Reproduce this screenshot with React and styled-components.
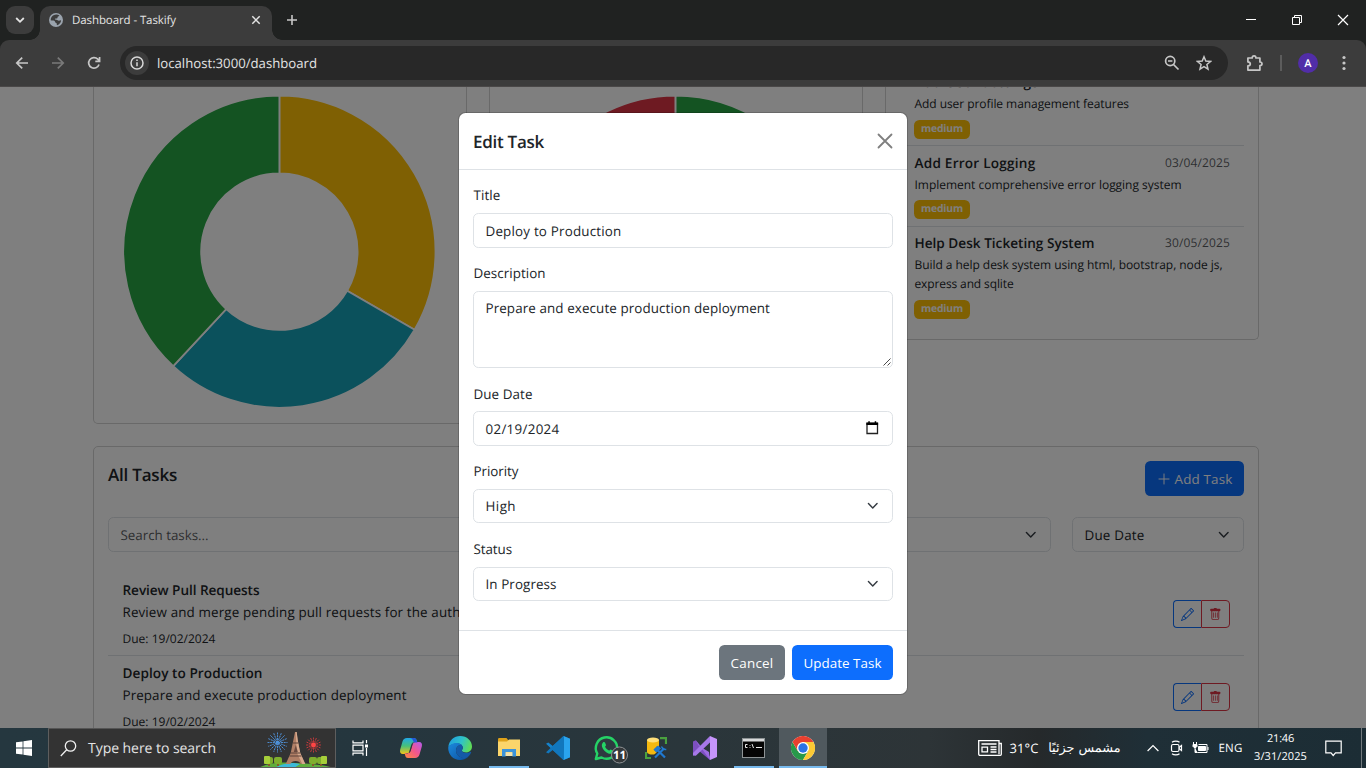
import React, { useLayoutEffect, useRef, useState } from "react";
import styled, { createGlobalStyle, css } from "styled-components";

const Global = createGlobalStyle`
  *, *::before, *::after { box-sizing: border-box; }
  html, body { margin: 0; height: 768px; overflow: hidden; background: #202221; }
  body { font-family: "Open Sans", "Noto Sans", "Liberation Sans", sans-serif; color: #212529; text-rendering: geometricPrecision; }
  svg { display: block; flex: none; }
`;

/* Text that spreads its letters to fill a given width */
const FitSpan = styled.span`
  display: inline-block;
  white-space: nowrap;
`;

function Fit({ w, children }) {
  const ref = useRef(null);
  const [spacing, setSpacing] = useState(0);
  useLayoutEffect(() => {
    const natural = ref.current.getBoundingClientRect().width;
    setSpacing((w - natural) / String(children).length);
  }, [w, children]);
  return (
    <FitSpan ref={ref} style={{ letterSpacing: `${spacing}px` }}>
      {children}
    </FitSpan>
  );
}

/* ---------- Browser frame ---------- */

const Screen = styled.div`
  width: 1366px;
  height: 768px;
  display: flex;
  flex-direction: column;
  overflow: hidden;
`;

const TabStrip = styled.div`
  flex: none;
  height: 40px;
  padding: 6px 0 0 6px;
  background: #202221;
  display: flex;
  align-items: flex-start;
`;

const TabSearch = styled.div`
  width: 28px;
  height: 28px;
  border-radius: 9px;
  background: #3c3c3c;
  display: grid;
  place-items: center;
  margin-right: 6px;
`;

const Tab = styled.div`
  position: relative;
  width: 232px;
  height: 34px;
  border-radius: 10px 10px 0 0;
  background: #3c3c3c;
  display: flex;
  align-items: center;
  padding: 0 10px 6px 9px;
  gap: 9px;
  color: #e3e3e3;
  font-size: 11.5px;
  &::before, &::after {
    content: "";
    position: absolute;
    bottom: 0;
    width: 10px;
    height: 10px;
  }
  &::before { left: -10px; background: radial-gradient(circle at 0 0, transparent 9.5px, #3c3c3c 10px); }
  &::after { right: -10px; background: radial-gradient(circle at 100% 0, transparent 9.5px, #3c3c3c 10px); }
`;

const TabTitle = styled.div` flex: 1; line-height: 20px; padding-top: 2px; `;

const NewTab = styled.div` margin: 8px 0 0 14px; `;

const WindowControls = styled.div`
  margin: 8px 17px 0 auto;
  display: flex;
  gap: 34px;
`;

const Toolbar = styled.div`
  flex: none;
  height: 47px;
  background: #202221;
`;

const ToolbarInner = styled.div`
  height: 47px;
  background: #3c3c3c;
  border-bottom: 1px solid #4a4848;
  border-radius: 9px 9px 0 0;
  display: flex;
  align-items: center;
  padding: 0 14px 0 14px;
`;

const NavButtons = styled.div`
  display: flex;
  gap: 20px;
  width: 106px;
`;

const Omnibox = styled.div`
  width: 1108px;
  height: 34px;
  border-radius: 17px;
  background: #282828;
  display: flex;
  align-items: center;
  padding: 0 16px 0 5px;
  color: #e3e3e3;
  font-size: 13.2px;
`;

const InfoDot = styled.div`
  width: 24px;
  height: 24px;
  border-radius: 50%;
  background: #3c3c3c;
  display: grid;
  place-items: center;
  margin-right: 8px;
`;

const Url = styled.div`
  flex: 1;
  line-height: 20px;
`;

const OmniIcons = styled.div` display: flex; gap: 16px; `;

const ToolActions = styled.div`
  margin-left: 18px;
  display: flex;
  align-items: center;
`;

const Divider = styled.div`
  width: 2px;
  height: 16px;
  margin: 0 16px 0 16px;
  background: #5c5c5c;
`;

const Avatar = styled.div`
  width: 20px;
  height: 20px;
  border-radius: 50%;
  background: #512da8;
  color: #fff;
  font-family: Roboto, sans-serif;
  font-size: 11px;
  font-weight: 500;
  line-height: 21px;
  text-align: center;
  margin-right: 24px;
`;

/* ---------- Page ---------- */

const Viewport = styled.div`
  position: relative;
  flex: none;
  height: 641px;
  overflow: hidden;
  background: #fff;
  font-size: 13.6px;
`;

const Page = styled.main`
  width: 1166px;
  margin-left: 93px;
`;

const Row = styled.div`
  display: grid;
  grid-template-columns: repeat(3, 374px);
  gap: 22px;
  align-items: start;
  margin-bottom: 22px;
  height: 337px;
`;

const Card = styled.section`
  border: 1px solid #d2d2d2;
  border-radius: 5px;
  background: #fff;
`;

const ChartCard = styled(Card)`
  height: 337px;
  border-top: 0;
  border-radius: 0 0 5px 5px;
  padding-left: 15px;
`;

const UpcomingCard = styled(Card)`
  height: 253px;
  border-top: 0;
  border-radius: 0 0 5px 5px;
  padding: 0 14px;
  overflow: hidden;
`;

const Upcoming = styled.div`
  height: ${(p) => p.$h}px;
  padding: ${(p) => p.$pt}px 14px 0 14.5px;
  border-bottom: ${(p) => (p.$last ? 0 : 1)}px solid #dee2e6;
  margin-top: ${(p) => p.$shift || 0}px;
`;

const UpcomingHead = styled.div`
  display: flex;
  justify-content: space-between;
  height: 20px;
  line-height: 20px;
`;

const Strong = styled.div`
  font-size: 13.6px;
  font-weight: 600;
`;

const Muted = styled.div`
  color: rgba(33, 37, 41, 0.75);
  font-size: 12px;
`;

const Small = styled.div`
  font-size: 12px;
  line-height: 19px;
  padding-top: 2px;
`;

const Badge = styled.div`
  width: 56px;
  height: 18.5px;
  margin: ${(p) => p.$mt}px 0 0 -0.5px;
  padding-top: 1px;
  border-radius: 5.4px;
  background: #ffc107;
  color: #fff;
  font-size: 10.4px;
  font-weight: 700;
  line-height: 17.5px;
  text-align: center;
`;

const TasksCard = styled(Card)`
  height: 320px;
  padding: 14px 14px 0;
`;

const TasksHead = styled.div`
  display: flex;
  justify-content: space-between;
  height: 56px;
`;

const H5 = styled.h5`
  margin: 0;
  font-size: 17px;
  font-weight: 600;
  line-height: 27px;
`;

const Button = styled.button`
  border: 0;
  height: 35px;
  width: ${(p) => p.$w}px;
  padding: 1px 0 0;
  border-radius: 5.4px;
  background: ${(p) => (p.$secondary ? "#6c757d" : "#0d6efd")};
  color: #fff;
  font: ${(p) => p.$weight || 500} 13.4px "Open Sans", sans-serif;
  display: flex;
  align-items: center;
  justify-content: center;
  gap: 4px;
`;

const Filters = styled.div`
  display: grid;
  grid-template-columns: 364px repeat(3, 171.5px) 172px;
  gap: 21.375px;
  margin-bottom: 20px;
`;

const field = css`
  border: 1px solid #dee2e6;
  border-radius: 5.4px;
  background: #fff;
  padding: 0 13.5px 0 11.5px;
  font-size: 13.4px;
  display: flex;
  justify-content: space-between;
  align-items: center;
`;

const Field = styled.div`
  ${field}
  height: ${(p) => p.$h || 35}px;
  color: ${(p) => (p.$placeholder ? "rgba(33,37,41,.75)" : "#212529")};
`;

const TextArea = styled.div`
  ${field}
  height: 77px;
  padding: 6px 0 0 11.5px;
  align-items: flex-start;
  line-height: 20px;
`;

const ResizeGrip = styled.svg` align-self: flex-end; `;

const CalendarIcon = styled.svg` margin-bottom: 2px; `;

const Task = styled.div`
  height: 84px;
  padding: 7px 14.5px 0 14.5px;
  border-bottom: 1px solid #dee2e6;
  display: flex;
  justify-content: space-between;
  & + & { padding-top: 6px; }
`;

const TaskDesc = styled.div`
  font-size: 13.4px;
  line-height: 22px;
`;

const TaskDue = styled.div`
  font-size: 12px;
  line-height: 20px;
  padding-top: 6px;
`;

const TaskTitle = styled(Strong)` line-height: 22px; `;

const Actions = styled.div`
  display: flex;
  margin-top: 21px;
`;

const IconButton = styled.div`
  width: ${(p) => (p.$danger ? 29 : 28)}px;
  height: 28px;
  border: 1px solid ${(p) => (p.$danger ? "#dc3545" : "#0d6efd")};
  color: ${(p) => (p.$danger ? "#dc3545" : "#0d6efd")};
  border-radius: ${(p) => (p.$danger ? "0 4px 4px 0" : "4px 0 0 4px")};
  ${(p) => !p.$danger && css` border-right: 0; `}
  display: grid;
  place-items: center;
`;

/* ---------- Dialog ---------- */

const Backdrop = styled.div`
  position: absolute;
  inset: 0;
  background: rgba(0, 0, 0, 0.5);
  padding: 26px 0 0 459px;
`;

const Modal = styled.div`
  width: 448px;
  height: 581px;
  border-radius: 6.5px;
  background: #fff;
  box-shadow: 0 0 0 1px rgba(0, 0, 0, 0.175);
`;

const ModalHeader = styled.div`
  height: 57px;
  padding: 0 14px;
  border-bottom: 1px solid #dee2e6;
  display: flex;
  align-items: center;
  justify-content: space-between;
`;

const ModalBody = styled.div`
  height: 460px;
  padding: 14px 14px 0;
`;

const Group = styled.div` height: ${(p) => p.$h}px; `;

const Label = styled.div`
  font-size: 13.4px;
  line-height: 22px;
  padding-left: 0.5px;
  height: ${(p) => p.$h || 29}px;
`;

const ModalFooter = styled.div`
  height: 64px;
  padding: 14px;
  border-top: 1px solid #dee2e6;
  display: flex;
  justify-content: flex-end;
  gap: 7px;
`;

/* ---------- Taskbar ---------- */

const Taskbar = styled.div`
  flex: none;
  height: 40px;
  display: flex;
  background: linear-gradient(90deg, #25373f 0, #25363e 28%, #2a363b 50%, #2d3437 68%, #25292b 76%, #1f2f37 84%, #1c2d35 100%);
  color: #fff;
  font-size: 11.5px;
`;

const Start = styled.div`
  width: 48px;
  display: grid;
  place-items: center;
`;

const SearchBox = styled.div`
  width: 288px;
  background: #333;
  border: 1px solid #5e5e5e;
  border-top-color: #555;
  display: flex;
  align-items: center;
  padding-left: 11px;
  color: #e4e4e4;
  font-size: 14px;
`;

const SearchText = styled.div` flex: 1; padding: 1px 0 0 11px; `;

const Apps = styled.div`
  display: flex;
  gap: 1px;
  margin-left: 3px;
`;

const AppTile = styled.div`
  width: 48px;
  height: 40px;
  display: flex;
  align-items: center;
  justify-content: center;
  background: ${(p) => (p.$active ? "#50595e" : "transparent")};
  ${(p) =>
    p.$line &&
    css`
      background-image: linear-gradient(#76b9ed, #76b9ed);
      background-size: ${p.$line}px 2px;
      background-position: center bottom;
      background-repeat: no-repeat;
    `}
`;

const TaskView = styled(Start)``;

const Tray = styled.div`
  margin-left: auto;
  display: flex;
  align-items: center;
`;

const Weather = styled.div`
  display: flex;
  align-items: center;
  margin-right: 26.5px;
  font-size: 13px;
`;

const Degrees = styled.div` margin: 0 9px 0 8px; `;

const Arabic = styled.div`
  width: 73px;
  direction: rtl;
  white-space: nowrap;
  font-family: "DejaVu Sans", "Noto Sans", sans-serif;
  font-size: 12.8px;
`;

const TrayIcons = styled.div`
  display: flex;
  align-items: center;
  gap: 9.5px;
`;

const Clock = styled.div`
  width: 54px;
  margin: 0 17.5px 0 11px;
  text-align: center;
  line-height: 18px;
  font-size: 11px;
`;

const ShowDesktop = styled.div`
  height: 40px;
  width: 5px;
  margin-left: 19px;
  border-left: 1px solid #71797d;
`;

/* ---------- Drawings ---------- */

const Chevron = () => (
  <svg width="11.500" height="11.500" viewBox="0 0 16 16" fill="none" stroke="#343a40" strokeWidth="2" strokeLinecap="round" strokeLinejoin="round">
    <path d="m2 5 6 6 6-6" />
  </svg>
);

const Pencil = () => (
  <svg width="13" height="13" viewBox="0 0 16 16" fill="currentColor">
    <path d="M12.146.146a.5.5 0 0 1 .708 0l3 3a.5.5 0 0 1 0 .708l-10 10a.5.5 0 0 1-.168.11l-5 2a.5.5 0 0 1-.65-.65l2-5a.5.5 0 0 1 .11-.168zM11.207 2.5 13.5 4.793 14.793 3.5 12.5 1.207zm1.586 3L10.5 3.207 4 9.707V10h.5a.5.5 0 0 1 .5.5v.5h.5a.5.5 0 0 1 .5.5v.5h.293zm-9.761 5.175-.106.106-1.528 3.821 3.821-1.528.106-.106A.5.5 0 0 1 5 12.5V12h-.5a.5.5 0 0 1-.5-.5V11h-.5a.5.5 0 0 1-.468-.325" />
  </svg>
);

const Trash = () => (
  <svg width="12.600" height="12.600" viewBox="0 0 16 16" fill="currentColor">
    <path d="M2.500 1a1 1 0 0 0-1 1v1a1 1 0 0 0 1 1H3v9a2 2 0 0 0 2 2h6a2 2 0 0 0 2-2V4h.5a1 1 0 0 0 1-1V2a1 1 0 0 0-1-1H10a1 1 0 0 0-1-1H7a1 1 0 0 0-1 1zM4.100 4h7.800v9.100a.9.9 0 0 1-.9.9H5a.9.9 0 0 1-.9-.9z" fillRule="evenodd" />
    <path d="M5.500 5.500A.5.5 0 0 1 6 6v6a.5.5 0 0 1-1 0V6a.5.5 0 0 1 .5-.5m2.500 0a.5.5 0 0 1 .5.5v6a.5.5 0 0 1-1 0V6a.5.5 0 0 1 .5-.5m3 .5a.5.5 0 0 0-1 0v6a.5.5 0 0 0 1 0z" />
  </svg>
);

function Donut({ cx, slices }) {
  const cy = 164.7, R = 155.3, r = 79;
  const at = (deg, rad) => {
    const a = (deg - 90) * Math.PI / 180;
    return `${cx + rad * Math.cos(a)} ${cy + rad * Math.sin(a)}`;
  };
  return (
    <svg width="343" height="336" viewBox="0 0 343 336">
      {slices.map(([from, to, color]) => {
        const large = to - from > 180 ? 1 : 0;
        return (
          <path
            key={color}
            fill={color}
            stroke="#fff"
            strokeWidth="1.8"
            d={`M${at(from, R + 0.8)}A${R + 0.8} ${R + 0.8} 0 ${large} 1 ${at(to, R + 0.8)}L${at(to, r - 0.8)}A${r - 0.8} ${r - 0.8} 0 ${large} 0 ${at(from, r - 0.8)}Z`}
          />
        );
      })}
    </svg>
  );
}

const Globe = () => (
  <svg width="14" height="14" viewBox="0 0 14 14">
    <circle cx="7" cy="7" r="7" fill="#9aa3ad" />
    <path d="M6.2 1.7c1.3-.5 3-.2 4.2.8-.3.9-1.1.7-1.7 1.2-.5.5.3 1-.4 1.6-.8.5-1.9-.1-2.3.7-.2.6.8.8 1.5.8 1 0 1.3.8 2.2 1 .8.1 1.7-.6 2.4-.5-.1 2.3-1.7 4.3-4 4.900-.5-.5-.2-1.300-.5-1.900-.4-.6-1.300-.5-1.500-1.300-.1-.7-.7-1.300-1.500-1.500-.8-.1-1.700.1-2.900-.2C1.600 5 3 2.700 5 2z" fill="#3c3c3c" />
  </svg>
);

const Eiffel = () => (
  <svg width="80" height="38" viewBox="-1 -1 80 38">
    <path d="M2 38C14 32 28 32 40 33s26 1 38 5z" fill="#5fae3d" />
    <path d="M18 38c8-4 14-5 20-5l6 1-6 4z" fill="#3cb9d8" />
    {[10, 19, 54, 62].map((x) => (
      <g key={x}>
        <path d={`M${x + 2} 32h2v4h-2z`} fill="#8a5a2b" />
        <rect x={x - 1} y="27" width="8" height="7" rx="2" fill="#7fae2e" />
      </g>
    ))}
    <rect x="8" y="26" width="6" height="8" rx="1" fill="#a7cf3a" />
    <rect x="65" y="26" width="6" height="8" rx="1" fill="#a7cf3a" />
    <path d="M39 2h1.600l1 8 2.600 13 5 11h-4.500c-1-4-9.300-4-10.300 0H29.700l5-11 2.700-13z" fill="#b07f66" />
    <path d="M39.500 2h1.200l1 8 2.600 13 5 11h-3L41 23z" fill="#d6a98d" />
    <path d="M34.500 23h10M33.500 26h12M37 13h5.500" stroke="#5d4238" strokeWidth="1.200" />
    <path d="M39.800 15l2 7h-4z" fill="#6b4b40" />
    <g stroke="#4f95e0" strokeWidth=".9" strokeDasharray="2 .7">
      {[0, 22.5, 45, 67.5, 90, 112.5, 135, 157.5].map((a) => (
        <path key={a} d="M11.500 12.500h20" transform={`rotate(${a} 21.500 12.500)`} />
      ))}
    </g>
    <g stroke="#e03a3e" strokeWidth=".8" strokeDasharray="2 .6">
      {[0, 22.5, 45, 67.5, 90, 112.5, 135, 157.5].map((a) => (
        <path key={a} d="M50 15h15" transform={`rotate(${a} 57.500 15)`} />
      ))}
    </g>
    <circle cx="57.500" cy="15" r="2.400" fill="#ff4545" />
  </svg>
);

const Copilot = () => (
  <svg width="24" height="24" viewBox="0 0 24 24">
    <defs>
      <linearGradient id="cpA" x1="0" y1="0" x2="0" y2="1"><stop stopColor="#21a9e8" /><stop offset=".5" stopColor="#47c07a" /><stop offset="1" stopColor="#f5c518" /></linearGradient>
      <linearGradient id="cpB" x1="1" y1="0" x2="0" y2="1"><stop stopColor="#b45bf0" /><stop offset=".5" stopColor="#f2568b" /><stop offset="1" stopColor="#ff8a3c" /></linearGradient>
    </defs>
    <path d="M8 2h7c1.500 0 2.300 1 2.700 2.300L18.500 7H15c-1.500 0-2.300.8-2.800 2.500l-1.700 5.700C10 17 9 18 7.500 18H4c-2.500 0-3.500-2-2.800-4.500l2.300-8C4.200 3.300 5.500 2 8 2z" fill="url(#cpA)" />
    <path d="M16 22H9c-1.500 0-2.300-1-2.700-2.300L5.500 17H9c1.500 0 2.300-.8 2.800-2.500l1.700-5.700C14 7 15 6 16.500 6H20c2.500 0 3.500 2 2.800 4.500l-2.300 8C19.800 20.700 18.500 22 16 22z" fill="url(#cpB)" />
    <path d="M8 2h7c1.500 0 2.300 1 2.700 2.300l.7 2.200h-3.600L14 4.500C13.500 3 12.500 2 11 2z" fill="#2456d6" />
    <path d="M13.500 8.800C14 7 15 6 16.500 6h-1.700c-1.300.2-2.100 1-2.600 2.800l-2 6.800c-.4 1.400-1 2-2 2.400h-2.400L9 17c1.500 0 2.300-.8 2.800-2.500z" fill="#2a343a" opacity=".55" />
  </svg>
);

const Edge = () => (
  <svg width="24" height="24" viewBox="0 0 24 24">
    <defs>
      <linearGradient id="edA" x1="0" y1=".2" x2="1" y2=".5"><stop stopColor="#1f9de0" /><stop offset=".55" stopColor="#2fc2c9" /><stop offset="1" stopColor="#5fdc58" /></linearGradient>
      <linearGradient id="edB" x1="0" y1="0" x2="1" y2="1"><stop stopColor="#1b8ade" /><stop offset="1" stopColor="#0c4f9e" /></linearGradient>
    </defs>
    <path d="M.3 11C1 4.600 6 0 12.200 0 19 0 24 5 24 10.500c0 3.500-2.600 6-6 6-2.600 0-4.200-1-4.200-1.900 0-.7 1-1 1-2.800 0-2.300-2.300-4.300-5.600-4.300C5.500 7.500 2 9 .3 11z" fill="url(#edA)" />
    <path d="M.2 11.500C1.500 8.800 5 7 8.600 7c2 0 3.800.7 4.900 1.700-3.800.3-5.500 3-5.500 5.700 0 4.200 3.800 7.400 8.400 7.400 1.300 0 2.700-.3 3.600-.7-2 2-4.900 2.900-8 2.900C5.300 24 0 18.700.2 11.500z" fill="url(#edB)" />
    <path d="M8 14.400c0-2.700 1.700-5.100 5.200-5.800 1.100 1 1.600 2.100 1.600 3.200 0 1.800-1 2.100-1 2.800 0 1.200 2 2.400 4.800 2.400 1.600 0 3-.5 4-1.200.5-.3.8.100.5.700-1 2.400-2.300 4.200-4.300 5.200-5.800 1.300-10.800-2.500-10.800-7.300z" fill="#145aa8" />
  </svg>
);

const Folder = () => (
  <svg width="22" height="20" viewBox="0 0 22 20">
    <path d="M0 1.500C0 .6.500 0 1.200 0h7.300l2 2.500V5H0z" fill="#dfa21a" />
    <path d="M0 3.500h9l2-2h11V18H0z" fill="#fbd56b" />
    <path d="M4 11h14v7.500h-3.700V14H7.700v4.500H4z" fill="#3c93da" />
    <path d="M7.700 14.500h6.600V18H7.700z" fill="#f4e2ae" />
  </svg>
);

const VSCode = () => (
  <svg width="24" height="24" viewBox="0 0 24 24">
    <path d="M17.500 0 6.800 10 2.300 6.600 0 7.700 17.500 24l6.500-2.800-6-4.800z" fill="#1583cc" />
    <path d="M17.500 24 6.800 14l-4.500 3.400L0 16.300 17.500 0 24 2.800 18 7.600z" fill="#1177bd" />
    <path d="M17.500 0 24 2.800v18.400L17.500 24c.3-.3.500-.8.500-1.400V1.400c0-.6-.2-1.100-.5-1.400z" fill="#2aa4ee" />
  </svg>
);

const WhatsApp = () => (
  <svg width="42" height="32" viewBox="0 0 42 32">
    <g transform="translate(7.500 2)">
      <path d="M2.300 25 3.800 19.500A10.700 10.700 0 1 1 8 23.500z" fill="#2e3b40" stroke="#25d366" strokeWidth="2.400" strokeLinejoin="round" />
      <path d="M9.500 8.500c.5-.6 1.700-.6 2 .1l1 2.300c.2.600-1 1.500-.9 1.900.8 1.700 2.200 3 3.900 3.800.5.200 1.300-1.200 1.800-1l2.300 1.100c.6.300.3 1.900-.4 2.400-1.200 1-2.900.9-4.400.3-3-1.200-5.200-3.500-6.200-6.300-.5-1.600-.2-3.600.9-4.600z" fill="#25d366" />
    </g>
    <circle cx="33.500" cy="23" r="8" fill="#34383a" stroke="#8d9194" strokeWidth="1" />
    <text x="33.500" y="27.200" textAnchor="middle" fontFamily="Open Sans, sans-serif" fontSize="11.500" fontWeight="700" fill="#fff">11</text>
  </svg>
);

const SqlTools = () => (
  <svg width="22" height="22" viewBox="0 0 22 22">
    <path d="M15 1.200h6V7M1 15v6h5" stroke="#4aa13f" strokeWidth="2.200" fill="none" />
    <path d="M2 3v12c0 1.500 2.500 2.600 6 2.600s6-1.100 6-2.600V3z" fill="#f5b90f" />
    <ellipse cx="8" cy="3" rx="6" ry="2.600" fill="#ffe07a" />
    <path d="m10 20 8-8m-7.500-1L20 20" stroke="#2a3439" strokeWidth="4.500" />
    <path d="m10 20.500 8.500-8.500M11.500 12 20 20.500" stroke="#2079d0" strokeWidth="2.200" />
    <path d="m9.500 12.500 3.500-3 2 2-3.500 3zM16.500 9.500l1.500 2.800 3.300.2" stroke="#2079d0" strokeWidth="1.500" fill="#2079d0" />
  </svg>
);

const VisualStudio = () => (
  <svg width="24" height="24" viewBox="0 0 24 24">
    <path d="M0 5.500 2.800 4.300 17 20.500V24L5.500 14.500 2.800 18.500 0 19.500z" fill="#7d4fc0" />
    <path d="M2.800 4.300 17 24l-1-8L5.500 9.500z" fill="#9c6ae0" />
    <path d="M0 19.500V17L15.500 1.500 17 0v6.500L2.800 19.700z" fill="#a678e8" />
    <path d="M17 0l7 3v18l-7 3z" fill="#c695fb" />
  </svg>
);

const Terminal = () => (
  <svg width="24" height="20" viewBox="0 0 24 20">
    <rect x=".5" y=".5" width="22" height="19" fill="#050505" stroke="#8e9496" />
    <path d="M1 1h21v2.500H1z" fill="#d8dadb" />
    <path d="M5.500 6.500h-2v3h2M8 7v.8M8 9v.8M10 6l1.500 4M14 9.500h6" stroke="#e8e8e8" strokeWidth="1" fill="none" />
  </svg>
);

const Chrome = () => (
  <svg width="24" height="24" viewBox="0 0 24 24">
    <circle cx="12" cy="12" r="12" fill="#fff" />
    <path d="M1.600 6A12 12 0 0 0 12 24l5.200-9H6.800z" fill="#27994a" />
    <path d="M22.400 6A12 12 0 0 1 12 24l5.200-9L12 6z" fill="#fcc934" />
    <path d="M1.600 6 6.800 15 12 6h10.400A12 12 0 0 0 1.600 6z" fill="#e8402f" />
    <circle cx="12" cy="12" r="6" fill="#fff" />
    <circle cx="12" cy="12" r="4.700" fill="#2b73e6" />
  </svg>
);

const line = { fill: "none", stroke: "#c7c7c7", strokeWidth: 1.7 };

function BrowserFrame() {
  return (
    <>
      <TabStrip>
        <TabSearch>
          <svg width="10" height="8" viewBox="0 0 10 8" fill="none" stroke="#e3e3e3" strokeWidth="1.800"><path d="m1.200 2 3.800 3.800L8.800 2" /></svg>
        </TabSearch>
        <Tab>
          <Globe />
          <TabTitle><Fit w={104}>Dashboard - Taskify</Fit></TabTitle>
          <svg width="12" height="12" viewBox="0 0 12 12" fill="none" stroke="#e3e3e3" strokeWidth="1.500"><path d="m2.300 2.300 7.400 7.400m0-7.400L2.300 9.700" /></svg>
        </Tab>
        <NewTab>
          <svg width="12" height="12" viewBox="0 0 12 12" {...line} strokeWidth="1.600"><path d="M6 1v10M1 6h10" /></svg>
        </NewTab>
        <WindowControls>
          <svg width="12" height="12" viewBox="0 0 12 12" stroke="#fff"><path d="M1 5.500h10" /></svg>
          <svg width="12" height="12" viewBox="0 0 12 12" stroke="#fff" fill="none"><path d="M1.500 3.500h7v7h-7zM3.500 3.500v-2h7v7h-2" /></svg>
          <svg width="12" height="12" viewBox="0 0 12 12" stroke="#fff" strokeWidth="1.200"><path d="m1 1 10 10M11 1 1 11" /></svg>
        </WindowControls>
      </TabStrip>
      <Toolbar>
        <ToolbarInner>
          <NavButtons>
            <svg width="16" height="16" viewBox="0 0 16 16" {...line}><path d="M14 8H3m5.200-5.300L2.800 8l5.400 5.300" /></svg>
            <svg width="16" height="16" viewBox="0 0 16 16" {...line} stroke="#7a7a7a"><path d="M2 8h11M7.800 2.700 13.200 8l-5.400 5.300" /></svg>
            <svg width="16" height="16" viewBox="0 0 16 16" {...line}><path d="M13 9.500A5.300 5.300 0 1 1 11.800 4.200L13.500 6M13.600 2v4.300H9.300" /></svg>
          </NavButtons>
          <Omnibox>
            <InfoDot>
              <svg width="14" height="14" viewBox="0 0 14 14" fill="none" stroke="#d8d8d8" strokeWidth="1.500"><circle cx="7" cy="7" r="6" /><path d="M7 6.200v4M7 3.500v1.500" /></svg>
            </InfoDot>
            <Url><Fit w={160}>localhost:3000/dashboard</Fit></Url>
            <OmniIcons>
              <svg width="16" height="16" viewBox="0 0 16 16" {...line}><circle cx="6.200" cy="6" r="4.600" /><path d="m9.500 9.500 5 5M4 6h4.400" /></svg>
              <svg width="16" height="16" viewBox="0 0 16 16" {...line} strokeWidth="1.500"><path d="m8 1.800 1.800 4.300 4.700.4-3.600 3 1.100 4.600L8 11.700l-4 2.400 1.100-4.600-3.600-3 4.700-.4z" /></svg>
            </OmniIcons>
          </Omnibox>
          <ToolActions>
            <svg width="18" height="18" viewBox="0 0 18 18" {...line}><path d="M1.900 4h4.300c0-2.900 3.700-2.900 3.700 0h4v4c2.800 0 2.800 3.600 0 3.600v4.500h-12v-4.200c3.200-.4 3.200-3.600 0-4z" strokeLinejoin="round" /></svg>
            <Divider />
            <Avatar>A</Avatar>
            <svg width="4" height="16" viewBox="0 0 4 16" fill="#c7c7c7"><circle cx="2" cy="2.500" r="1.600" /><circle cx="2" cy="8" r="1.600" /><circle cx="2" cy="13.500" r="1.600" /></svg>
          </ToolActions>
        </ToolbarInner>
      </Toolbar>
    </>
  );
}

function UpcomingItem({ title, tw, date, lines, h, shift, last, pt = 7, gap = 6 }) {
  return (
    <Upcoming $h={h} $shift={shift} $last={last} $pt={pt}>
      <UpcomingHead>
        <Strong><Fit w={tw}>{title}</Fit></Strong>
        <Muted><Fit w={65}>{date}</Fit></Muted>
      </UpcomingHead>
      <Small>
        {lines.map(([t, w]) => <div key={t}><Fit w={w}>{t}</Fit></div>)}
      </Small>
      <Badge $mt={gap}><Fit w={42}>medium</Fit></Badge>
    </Upcoming>
  );
}

function TaskItem({ title, tw, desc, dw }) {
  return (
    <Task>
      <div>
        <TaskTitle><Fit w={tw}>{title}</Fit></TaskTitle>
        <TaskDesc><Fit w={dw}>{desc}</Fit></TaskDesc>
        <TaskDue><Fit w={93}>Due: 19/02/2024</Fit></TaskDue>
      </div>
      <Actions>
        <IconButton><Pencil /></IconButton>
        <IconButton $danger><Trash /></IconButton>
      </Actions>
    </Task>
  );
}

function Dashboard() {
  return (
    <Page>
      <Row>
        <ChartCard>
          <Donut cx={170.4} slices={[[0, 120, "#ffc107"], [120, 222.86, "#17a2b8"], [222.86, 360, "#28a745"]]} />
        </ChartCard>
        <ChartCard>
          <Donut cx={170.4} slices={[[0, 140, "#28a745"], [140, 250, "#ffc107"], [250, 360, "#dc3545"]]} />
        </ChartCard>
        <UpcomingCard>
          <UpcomingItem shift={-22} h={81} gap={7} title="Add User Settings" tw={124} date="02/04/2025" lines={[["Add user profile management features", 214.5]]} />
          <UpcomingItem h={81} title="Add Error Logging" tw={121} date="03/04/2025" lines={[["Implement comprehensive error logging system", 267]]} />
          <UpcomingItem last h={99} pt={6} gap={7} title="Help Desk Ticketing System" tw={180} date="30/05/2025" lines={[["Build a help desk system using html, bootstrap, node js,", 308], ["express and sqlite", 99]]} />
        </UpcomingCard>
      </Row>
      <TasksCard>
        <TasksHead>
          <H5><Fit w={69}>All Tasks</Fit></H5>
          <Button $w={99} $weight={400}>
            <svg width="14" height="14" viewBox="0 0 16 16" stroke="#fff" strokeWidth="1.100"><path d="M8 1.800v12.400M1.800 8h12.400" /></svg>
            <Fit w={58}>Add Task</Fit>
          </Button>
        </TasksHead>
        <Filters>
          <Field $placeholder><Fit w={88}>Search tasks...</Fit></Field>
          <Field><span>All Status</span><Chevron /></Field>
          <Field><span>All Priority</span><Chevron /></Field>
          <Field><span /><Chevron /></Field>
          <Field><Fit w={60}>Due Date</Fit><Chevron /></Field>
        </Filters>
        <TaskItem title="Review Pull Requests" tw={137} desc="Review and merge pending pull requests for the authentication system" dw={450} />
        <TaskItem title="Deploy to Production" tw={140} desc="Prepare and execute production deployment" dw={284} />
      </TasksCard>
    </Page>
  );
}

function EditTask() {
  return (
    <Backdrop>
      <Modal>
        <ModalHeader>
          <H5><Fit w={71}>Edit Task</Fit></H5>
          <svg width="16" height="16" viewBox="0 0 16 16" stroke="#7f7f7f" strokeWidth="1.800" strokeLinecap="round"><path d="m1.500 1.500 13 13m0-13-13 13" /></svg>
        </ModalHeader>
        <ModalBody>
          <Group $h={78}>
            <Label><Fit w={27}>Title</Fit></Label>
            <Field><Fit w={136}>Deploy to Production</Fit></Field>
          </Group>
          <Group $h={120.5}>
            <Label><Fit w={72}>Description</Fit></Label>
            <TextArea>
              <Fit w={284.5}>Prepare and execute production deployment</Fit>
              <ResizeGrip width="10" height="10" viewBox="0 0 10 10" stroke="#4b4b4b" strokeWidth="1"><path d="M1.500 8.500l7-7M5.500 8.500l3-3" /></ResizeGrip>
            </TextArea>
          </Group>
          <Group $h={77.5}>
            <Label $h={28.5}><Fit w={59}>Due Date</Fit></Label>
            <Field>
              <Fit w={74}>02/19/2024</Fit>
              <CalendarIcon width="14" height="14" viewBox="0 0 14 14"><path d="M2 2.500h10.500v10H2z" fill="none" stroke="#222" strokeWidth="1.300" /><path d="M1.400 1.500h11.700v2.500H1.400zM3.300.3h1.500v2H3.300zM9.700.3h1.500v2H9.700z" /></CalendarIcon>
            </Field>
          </Group>
          <Group $h={78}>
            <Label><Fit w={45}>Priority</Fit></Label>
            <Field $h={34}><Fit w={30.5}>High</Fit><Chevron /></Field>
          </Group>
          <Group $h={78}>
            <Label><Fit w={38.5}>Status</Fit></Label>
            <Field $h={34}><Fit w={71}>In Progress</Fit><Chevron /></Field>
          </Group>
        </ModalBody>
        <ModalFooter>
          <Button $secondary $w={66}><Fit w={43}>Cancel</Fit></Button>
          <Button $w={101}><Fit w={78}>Update Task</Fit></Button>
        </ModalFooter>
      </Modal>
    </Backdrop>
  );
}

function DesktopTaskbar() {
  return (
    <Taskbar>
      <Start>
        <svg width="16" height="16" viewBox="0 0 16 16" fill="#fff"><path d="M0 2.300 6.600 1.400v6.200H0zM7.400 1.300 16 0v7.600H7.400zM0 8.400h6.600v6.200L0 13.700zM7.400 8.400H16V16l-8.600-1.300z" /></svg>
      </Start>
      <SearchBox>
        <svg width="17" height="17" viewBox="0 0 17 17" fill="none" stroke="#f0f0f0" strokeWidth="1.300"><circle cx="10.500" cy="6" r="5.200" /><path d="M6.700 9.800.8 16" /></svg>
        <SearchText><Fit w={128}>Type here to search</Fit></SearchText>
        <Eiffel />
      </SearchBox>
      <TaskView>
        <svg width="17" height="16" viewBox="0 0 17 16" fill="none" stroke="#fff" strokeWidth="1.200"><path d="M1 .5v2.300h10V.5M1 15.500v-2.300h10v2.300M1 5.200h10v5.600H1zM14.500 0v3.200M14.500 8v8" /><path d="M13 4.500h3v3h-3z" fill="#fff" stroke="none" /></svg>
      </TaskView>
      <Apps>
        <AppTile><Copilot /></AppTile>
        <AppTile><Edge /></AppTile>
        <AppTile $line={40}><Folder /></AppTile>
        <AppTile><VSCode /></AppTile>
        <AppTile><WhatsApp /></AppTile>
        <AppTile><SqlTools /></AppTile>
        <AppTile><VisualStudio /></AppTile>
        <AppTile $line={40}><Terminal /></AppTile>
        <AppTile $active $line={48}><Chrome /></AppTile>
      </Apps>
      <Tray>
        <Weather>
          <svg width="24" height="16" viewBox="0 0 24 16" fill="none" stroke="#fff" strokeWidth="1.300"><path d="M21 3.500h2.300v10.800c0 .7-.5 1-1 1H2c-.8 0-1.300-.5-1.300-1.300V.7H21v13.500M3.500 4h15M12.500 7h6M12.500 9.500h6M12.500 12h6M4 7.200h5.500v4.600H4z" /></svg>
          <Degrees><Fit w={29}>31°C</Fit></Degrees>
          <Arabic>مشمس جزئيًا</Arabic>
        </Weather>
        <TrayIcons>
          <svg width="12" height="8" viewBox="0 0 12 8" fill="none" stroke="#fff" strokeWidth="1.200"><path d="m.6 7 5.400-5.500L11.400 7" /></svg>
          <svg width="14" height="16" viewBox="0 0 14 16" fill="none" stroke="#fff" strokeWidth="1.200"><path d="M3 2.200C5 .7 8.500.7 10.500 2.200M3 13.800c2 1.500 5.500 1.500 7.500 0" /><rect x="2.500" y="4.500" width="7.500" height="7" rx="1.500" /><path d="m10 7.500 2.500-2v5l-2.500-2" /></svg>
          <svg width="17" height="14" viewBox="0 0 17 14" stroke="#fff" fill="none"><path d="M6.500 3.500h8.500v8H5.500" /><path d="M6.500 5.500h7v4h-7z" fill="#fff" /><path d="M16 6v3" /><path d="M1.500 1v2M4.500 1v2M1 3.500h4v2L4 6.500H2l-1-1zM3 7v4.500h2.500" fill="#fff" /></svg>
          <Fit w={24}>ENG</Fit>
        </TrayIcons>
        <Clock>
          <div><Fit w={27}>21:46</Fit></div>
          <div><Fit w={53}>3/31/2025</Fit></div>
        </Clock>
        <svg width="17" height="17" viewBox="0 0 17 17" fill="none" stroke="#fff" strokeWidth="1.200"><path d="M.8 1.200h15.400v11.600H10.500L8.200 15.500 6 12.800H.8z" /></svg>
        <ShowDesktop />
      </Tray>
    </Taskbar>
  );
}

export default function App() {
  return (
    <Screen>
      <Global />
      <BrowserFrame />
      <Viewport>
        <Dashboard />
        <EditTask />
      </Viewport>
      <DesktopTaskbar />
    </Screen>
  );
}
